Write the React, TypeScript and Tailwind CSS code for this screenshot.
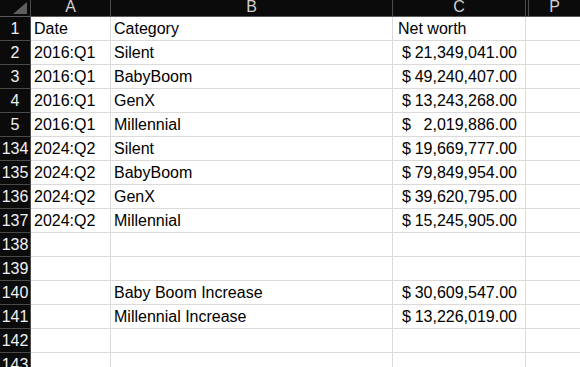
import React from "react";

type Row = { n: number; a?: string; b?: string; c?: string; money?: boolean };

const rows: Row[] = [
  { n: 1, a: "Date", b: "Category", c: "Net worth" },
  { n: 2, a: "2016:Q1", b: "Silent", c: "21,349,041.00", money: true },
  { n: 3, a: "2016:Q1", b: "BabyBoom", c: "49,240,407.00", money: true },
  { n: 4, a: "2016:Q1", b: "GenX", c: "13,243,268.00", money: true },
  { n: 5, a: "2016:Q1", b: "Millennial", c: "2,019,886.00", money: true },
  { n: 134, a: "2024:Q2", b: "Silent", c: "19,669,777.00", money: true },
  { n: 135, a: "2024:Q2", b: "BabyBoom", c: "79,849,954.00", money: true },
  { n: 136, a: "2024:Q2", b: "GenX", c: "39,620,795.00", money: true },
  { n: 137, a: "2024:Q2", b: "Millennial", c: "15,245,905.00", money: true },
  { n: 138 },
  { n: 139 },
  { n: 140, b: "Baby Boom Increase", c: "30,609,547.00", money: true },
  { n: 141, b: "Millennial Increase", c: "13,226,019.00", money: true },
  { n: 142 },
  { n: 143 },
];

export default function App() {
  return (
    <div className="w-[580px] h-[367px] overflow-hidden bg-white text-black text-[16px] leading-none" style={{ fontFamily: '"Liberation Sans", Arial, sans-serif' }}>
      {/* column headers */}
      <div className="flex h-[17px] bg-[#0b0b0b] border-b border-[#5a5a5a] text-[#d0d0d0]">
        <div className="relative w-[31px] shrink-0 border-r border-[#4a4a4a]">
          <svg className="absolute right-[3px] bottom-[2px]" width="14" height="12" viewBox="0 0 14 12">
            <polygon points="14,0 14,12 0,12" fill="#5e5e5e" />
          </svg>
        </div>
        <div className="w-[80px] shrink-0 border-r border-[#4a4a4a] flex justify-center -mt-px">A</div>
        <div className="w-[282px] shrink-0 border-r border-[#4a4a4a] flex justify-center -mt-px">B</div>
        <div className="w-[133px] shrink-0 border-r border-[#4a4a4a] flex justify-center -mt-px">C</div>
        <div className="w-[3px] shrink-0 border-r border-[#4a4a4a]" />
        <div className="flex-1 flex justify-center -mt-px">P</div>
      </div>

      {rows.map((r) => (
        <div key={r.n} className="flex h-6">
          <div className="w-[31px] shrink-0 bg-[#0b0b0b] text-[#f2f2f2] border-r border-b border-[#4a4a4a] flex items-end justify-center pb-[3px]">
            {r.n}
          </div>
          <div className="w-[80px] shrink-0 border-r border-b border-[#dadada] flex items-end pl-[3px] pb-[3px]">{r.a}</div>
          <div className="w-[282px] shrink-0 border-r border-b border-[#dadada] flex items-end pl-[3px] pb-[3px]">{r.b}</div>
          <div className={`w-[133px] shrink-0 border-r border-b border-[#dadada] flex items-end pr-[8px] pb-[3px] ${r.money ? "pl-[9px]" : "pl-[5px]"}`}>
            {r.money ? (
              <div className="flex w-full justify-between">
                <span>$</span>
                <span>{r.c}</span>
              </div>
            ) : (
              r.c
            )}
          </div>
          <div className="flex-1 border-b border-[#dadada]" />
        </div>
      ))}
    </div>
  );
}
